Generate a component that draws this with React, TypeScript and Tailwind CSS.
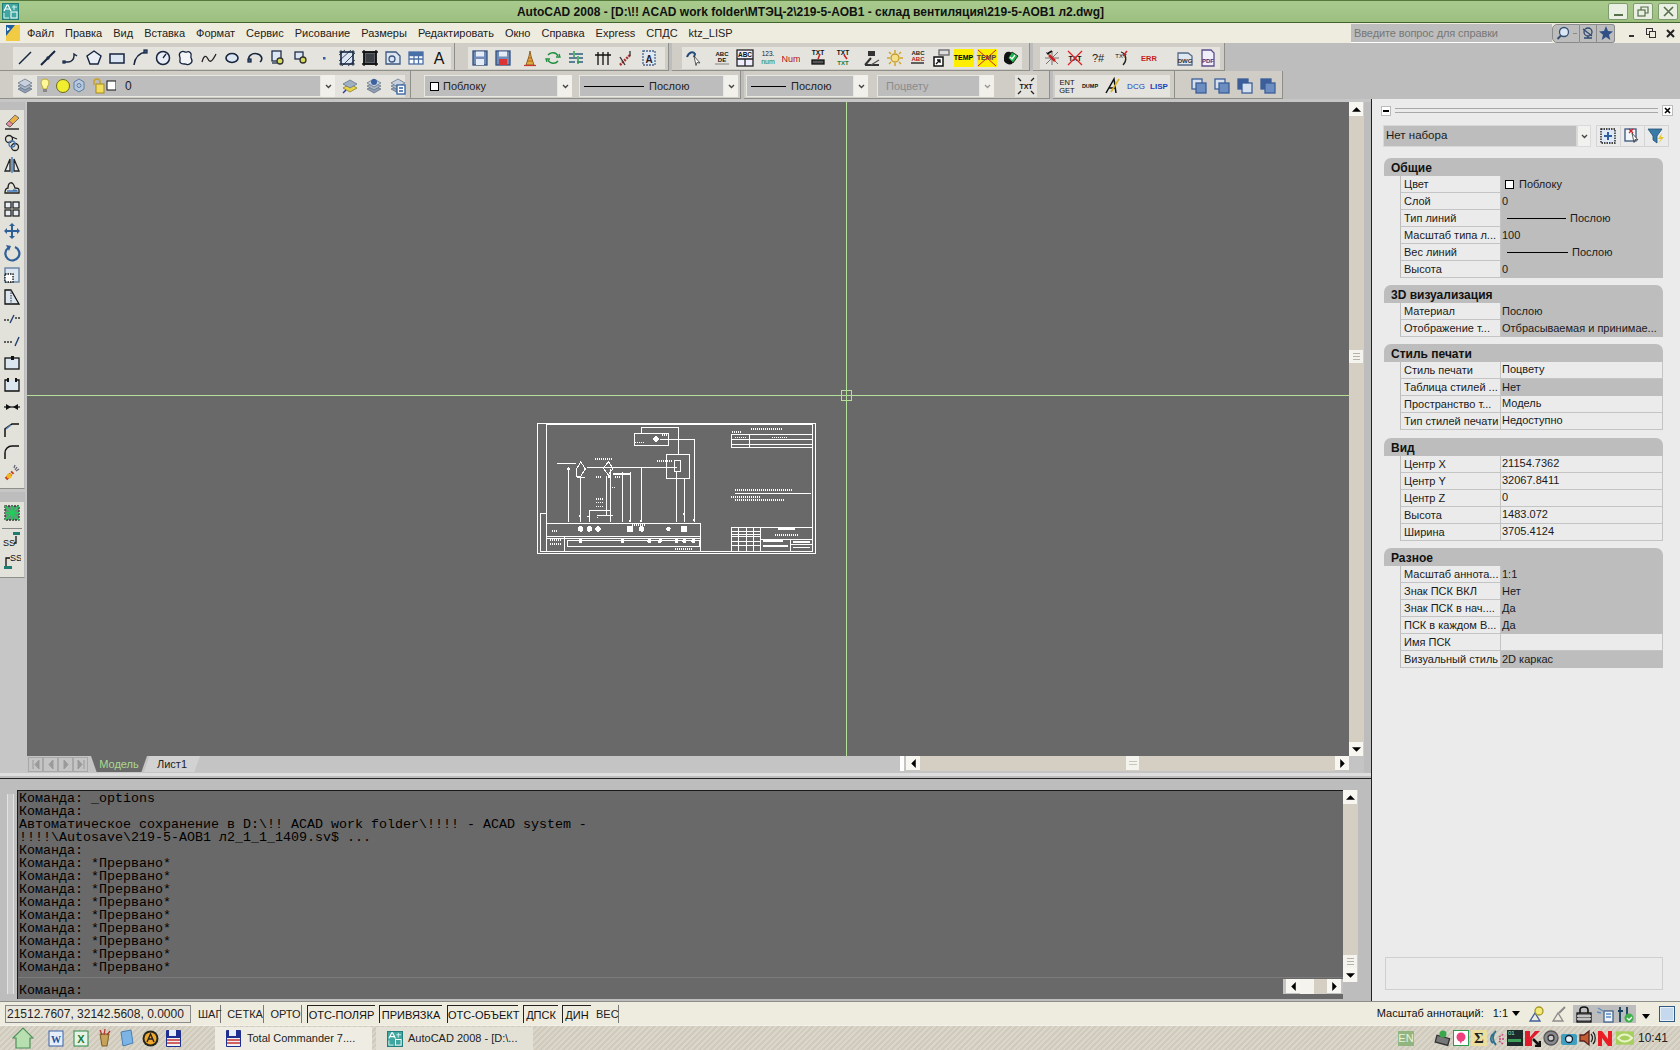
import type { ReactNode } from "react";

// --- small drawing helpers ---------------------------------------------------
const Ic = ({ children, s = 18 }: { children: ReactNode; s?: number }) => (
  <svg width={s} height={s} viewBox="0 0 18 18" fill="none" stroke="#1f2f4a" strokeWidth="1.3">
    {children}
  </svg>
);

const Cell = ({ children }: { children?: ReactNode }) => (
  <div className="w-[23px] h-[22px] flex items-center justify-center shrink-0">{children}</div>
);

const Gap4 = () => <div className="w-[4px] shrink-0" />;

const Word = ({ t, c = "#111", size = 7, y = 12, weight = 700 }: { t: string; c?: string; size?: number; y?: number; weight?: number }) => (
  <text x="9" y={y} textAnchor="middle" fontFamily="Liberation Sans" fontSize={size} fontWeight={weight} fill={c} stroke="none">
    {t}
  </text>
);

const Floppy = ({ red }: { red?: boolean }) => (
  <Ic>
    <rect x="2" y="2" width="14" height="14" fill="#6f8db8" stroke="#34507f" />
    <rect x="5" y="2.5" width="8" height="5" fill="#e6ecf5" stroke="none" />
    <rect x="5" y="10" width="8" height="6" fill={red ? "#d33" : "#e6ecf5"} stroke="none" />
  </Ic>
);

const Flame = () => (
  <Ic>
    <path d="M5 16L8 7l1-5 1 5 3 9z" fill="#e0a93a" stroke="#7d4c10" strokeWidth="0.8" />
    <path d="M6 12h6M7 9h4" stroke="#a8521a" strokeWidth="0.8" />
    <path d="M3 16.500h12" stroke="#c33" strokeWidth="1.200" />
  </Ic>
);

const Arrow = ({ dir }: { dir: "up" | "down" | "left" | "right" }) => (
  <svg width="9" height="9" viewBox="0 0 8 8" fill="#000">
    {dir === "up" && <path d="M0 6L4 2l4 4z" />}
    {dir === "down" && <path d="M0 2L4 6l4-4z" />}
    {dir === "left" && <path d="M6 0L2 4l4 4z" />}
    {dir === "right" && <path d="M2 0l4 4-4 4z" />}
  </svg>
);

const ScrollBtn = ({ dir }: { dir: "up" | "down" | "left" | "right" }) => (
  <div className="w-[14px] h-[14px] bg-[#f7f6f1] flex items-center justify-center shrink-0">
    <Arrow dir={dir} />
  </div>
);

const Thumb = ({ vertical }: { vertical?: boolean }) =>
  vertical ? (
    <div className="w-[14px] h-[13px] bg-[#f4f3ee] flex flex-col items-center justify-center gap-[2px]">
      <div className="w-[7px] h-px bg-[#b5b3a8]" />
      <div className="w-[7px] h-px bg-[#b5b3a8]" />
      <div className="w-[7px] h-px bg-[#b5b3a8]" />
    </div>
  ) : (
    <div className="w-[13px] h-[14px] bg-[#f4f3ee] flex flex-col items-center justify-center gap-[2px]">
      <div className="w-[8px] h-px bg-[#c9c7bb]" />
      <div className="w-[8px] h-px bg-[#c9c7bb]" />
    </div>
  );

// --- title + menu -----------------------------------------------------------
const AcadLogo = ({ s = 17 }: { s?: number }) => (
  <svg width={s} height={s} viewBox="0 0 17 17">
    <rect width="17" height="17" fill="#1f7d7a" />
    <rect x="1" y="1" width="15" height="15" fill="#3fa6a0" />
    <path d="M2 8L5 2h1l3 6M3.500 6h4" stroke="#fff" strokeWidth="1.2" fill="none" />
    <rect x="9" y="9" width="6" height="6" fill="none" stroke="#fff" />
    <path d="M2 10v5h5" stroke="#d7f3ee" fill="none" />
    <path d="M12 2v5M10 4h5" stroke="#d7f3ee" />
  </svg>
);

const WinBtn = ({ children }: { children: ReactNode }) => (
  <div className="w-[20px] h-[17px] bg-[#e9efe2] border border-[#7f9a6c] rounded-[2px] flex items-center justify-center">
    {children}
  </div>
);

const TitleBar = () => (
  <div className="h-[23px] bg-gradient-to-b from-[#a9ca8d] via-[#a3c688] to-[#9cbf80] border-t border-t-[#567a3e] border-b border-b-[#40642c] flex items-center shrink-0">
    <div className="ml-[2px]">
      <AcadLogo />
    </div>
    <div className="flex-1 text-center text-[12px] font-bold text-[#111] pr-[6px]">
      AutoCAD 2008 - [D:\!! ACAD work folder\МТЭЦ-2\219-5-АОВ1 - склад вентиляция\219-5-АОВ1 л2.dwg]
    </div>
    <div className="flex gap-[5px] pr-[2px]">
      <WinBtn>
        <div className="w-[9px] h-[2px] bg-[#56714a] mt-[7px]" />
      </WinBtn>
      <WinBtn>
        <svg width="12" height="11" viewBox="0 0 12 11" fill="none" stroke="#56714a" strokeWidth="1.2">
          <rect x="1" y="4" width="7" height="6" />
          <path d="M4 4V1h7v6H8" />
        </svg>
      </WinBtn>
      <WinBtn>
        <svg width="11" height="11" viewBox="0 0 11 11" stroke="#56714a" strokeWidth="1.6">
          <path d="M1 1l9 9M10 1l-9 9" />
        </svg>
      </WinBtn>
    </div>
  </div>
);

const MenuBar = () => (
  <div className="h-[20px] bg-[#eeecdf] flex items-center shrink-0">
    <div className="w-[24px] pl-[4px] h-full flex items-center">
      <svg width="17" height="18" viewBox="0 0 17 18">
        <rect x="2" y="1" width="14" height="16" fill="#f2cb45" />
        <path d="M2 1h9L2 12z" fill="#1f5f9f" />
        <path d="M3 3l3 2-3 2z" fill="#fff" />
      </svg>
    </div>
    <div className="flex gap-[11px] ml-[3px] text-[#222]">
      {["Файл", "Правка", "Вид", "Вставка", "Формат", "Сервис", "Рисование", "Размеры", "Редактировать", "Окно", "Справка", "Express", "СПДС", "ktz_LISP"].map((m) => (
        <span key={m}>{m}</span>
      ))}
    </div>
    <div className="ml-auto flex items-center h-full mr-[5px]">
      <div className="w-[201px] h-[19px] bg-[#bdbdbd] border-b border-white text-[#777] text-[11px] tracking-[-0.1px] pl-[3px] leading-[18px]">
        Введите вопрос для справки
      </div>
      <div className="w-[28px] h-[19px] bg-[#bdbdbd] border border-[#8a8a8a] rounded-l-[5px] flex items-center pl-[3px] gap-[3px]">
        <svg width="14" height="14" viewBox="0 0 14 14" fill="#dbe7f2" stroke="#35506f" strokeWidth="1.3">
          <circle cx="8" cy="6" r="4.500" />
          <path d="M5 9.500L1.500 13" strokeWidth="2" />
        </svg>
        <span className="w-[4px] h-px bg-[#888]" />
      </div>
      <div className="w-[17px] h-[19px] bg-[#bdbdbd] border-y border-r border-[#8a8a8a] flex items-center justify-center">
        <svg width="14" height="14" viewBox="0 0 14 14" fill="none" stroke="#2f4a72" strokeWidth="1.3">
          <circle cx="7" cy="6" r="4" />
          <path d="M3 12h8M7 10v2M2 3l9 7" />
        </svg>
      </div>
      <div className="w-[18px] h-[19px] bg-[#bdbdbd] border-y border-r border-[#8a8a8a] rounded-r-[3px] flex items-center justify-center">
        <svg width="14" height="14" viewBox="0 0 14 14" fill="#2f4f85">
          <path d="M7 0l2 5 5 .4-4 3.300L11.300 14 7 11l-4.300 3L4 8.700 0 5.400 5 5z" />
        </svg>
      </div>
      <div className="w-[5px] ml-[14px] h-[2px] bg-[#333] mt-[5px]" />
      <svg className="ml-[12px]" width="10" height="10" viewBox="0 0 10 10" fill="none" stroke="#333">
        <rect x="0.500" y="0.500" width="6" height="6" />
        <rect x="3.500" y="3.500" width="6" height="6" fill="#eeecdf" />
      </svg>
      <svg className="ml-[10px]" width="9" height="9" viewBox="0 0 9 9" stroke="#222" strokeWidth="2">
        <path d="M1 1l7 7M8 1L1 8" />
      </svg>
    </div>
  </div>
);

// --- top toolbars ------------------------------------------------------------
const Bar = ({ children, className }: { children: ReactNode; className: string }) => (
  <div className={`${className} h-full bg-[#cfcdc5] border-r border-r-[#8f8f8a] border-b border-b-[#8f8f8a] pt-[3px] flex items-center shrink-0`}>
    {children}
  </div>
);

const Inner = ({ children, className }: { children: ReactNode; className: string }) => (
  <div className={`${className} h-[22px] bg-[#e4e3dd] flex items-center shrink-0`}>{children}</div>
);

const node = "#2f5f9f";
const draw = [
  <Ic><path d="M3 15L15 3" stroke="#15243f" strokeWidth="1.5" /></Ic>,
  <Ic><path d="M2 16L16 2" stroke="#15243f" strokeWidth="2" /><circle cx="9" cy="9" r="1" fill={node} /></Ic>,
  <Ic><path d="M2 13h4a6 6 0 0 0 6-6V5l3 2" stroke="#15243f" strokeWidth="1.4" /><rect x="1" y="12" width="2" height="2" fill={node} /></Ic>,
  <Ic><path d="M9 2l7 5-3 8H5L2 7z" fill="#e9eef6" stroke="#15243f" strokeWidth="1.4" /></Ic>,
  <Ic><rect x="2" y="5" width="14" height="9" fill="#dce6f2" stroke="#15243f" strokeWidth="1.5" /></Ic>,
  <Ic><path d="M3 16C4 8 8 4 15 3" stroke="#15243f" strokeWidth="1.5" /><rect x="13" y="1" width="3" height="3" fill={node} /></Ic>,
  <Ic><circle cx="9" cy="9" r="6.500" fill="#e9eef6" stroke="#15243f" strokeWidth="1.5" /><path d="M9 9l3-4" stroke="#15243f" /></Ic>,
  <Ic><path d="M4 3c3-2 4 1 6 0s5 1 4 4 3 4 0 7-4 1-6 1-6 0-5-4-3-5 1-8z" fill="#f2f4f8" stroke="#15243f" /></Ic>,
  <Ic><path d="M2 13c2-7 4-7 6-3s4 3 8-5" stroke="#222" /></Ic>,
  <Ic><ellipse cx="9" cy="9" rx="6" ry="4.500" fill="#dce6f2" stroke="#15243f" strokeWidth="1.6" /></Ic>,
  <Ic><path d="M3 11A6.500 5 0 1 1 14 13" stroke="#15243f" strokeWidth="1.6" /><rect x="2" y="10" width="3" height="3" fill={node} /></Ic>,
  <Ic><rect x="3" y="2" width="9" height="10" fill="#dce6f2" /><circle cx="11" cy="12" r="3" fill="#d6dc5a" stroke="#333" /><path d="M3 14h5" /></Ic>,
  <Ic><rect x="3" y="3" width="8" height="7" fill="#dce6f2" /><circle cx="11" cy="11" r="3" fill="#d6dc5a" stroke="#333" /></Ic>,
  <Ic><rect x="8" y="8" width="2.500" height="2.500" fill={node} stroke="none" /></Ic>,
  <Ic><rect x="3" y="3" width="12" height="12" fill="#dce6f2" stroke="#15243f" /><path d="M1 6l6-5M1 12L13 1M4 17L17 4M10 17l7-6M3 1v16M15 1v16M1 3h16M1 15h16" strokeWidth="0.8" stroke="#15243f" /></Ic>,
  <Ic><rect x="3" y="3" width="12" height="12" fill="#5a6066" stroke="#111" strokeWidth="1.500" /><path d="M3 1v16M15 1v16M1 3h16M1 15h16" stroke="#111" /><rect x="5" y="5" width="8" height="8" fill="#3a3f44" stroke="none" /></Ic>,
  <Ic><path d="M2 3h10l4 4v8H2z" fill="#dce6f2" stroke="#3d587f" /><circle cx="8" cy="10" r="3" stroke="#3d587f" /></Ic>,
  <Ic><rect x="2" y="3" width="14" height="12" fill="#fff" stroke="#4a6fa8" /><path d="M2 6.500h14M2 10h14M7 3v12M11.500 3v12" stroke="#4a6fa8" /><rect x="2" y="3" width="14" height="3" fill="#4a6fa8" stroke="none" /></Ic>,
  <Ic><Word t="A" size={16} y={15} weight={400} /></Ic>,
];

const Row1 = () => (
  <div className="h-[28px] flex items-stretch shrink-0">
    <Bar className="w-[455px] pl-[13px]">
      <Inner className="w-[438px]">{draw.map((d, i) => <Cell key={i}>{d}</Cell>)}</Inner>
    </Bar>
    <Bar className="w-[214px] pl-[13px]">
      <Inner className="w-[197px]">
        <Cell><Floppy /></Cell>
        <Cell><Floppy red /></Cell>
        <Gap4 />
        <Cell><Flame /></Cell>
        <Cell><Ic><path d="M4 6a6 6 0 0 1 10 1M14 12a6 6 0 0 1-10-1" stroke="#1f8f3f" strokeWidth="1.5" /><path d="M12 8h4l-1-3M6 10H2l1 3" stroke="#1f8f3f" /></Ic></Cell>
        <Cell><Ic><path d="M2 5h4M8 5h8M2 9h8M12 9h4M2 13h6M10 13h6" stroke="#285f7f" strokeWidth="1.500" /><path d="M7 2v6M11 7v8" stroke="#2f9f4f" strokeWidth="1.500" /></Ic></Cell>
        <Gap4 />
        <Cell><Ic><path d="M1 6h16M4 3v13M9 3v13M14 3v13" stroke="#111" /></Ic></Cell>
        <Cell><Ic><path d="M3 16l10-10" stroke="#a83232" strokeWidth="2.500" strokeDasharray="2 1" /><path d="M13 2v5M3 8l5 8" stroke="#333" /></Ic></Cell>
        <Cell><Ic><rect x="3" y="2" width="12" height="14" fill="#dfe7f0" stroke="#4d648a" strokeDasharray="2 1" /><Word t="A" size={10} y={14} c="#223" /></Ic></Cell>
      </Inner>
    </Bar>
    <Bar className="w-[358px] pl-[10px] ml-[3px]">
      <Inner className="w-[340px]">
        <Cell><Ic><path d="M2 8c2-5 6-6 8-3l-1 3" stroke="#234a7a" strokeWidth="2" /><path d="M9 7l6 7-3-.5-1 3z" fill="#fff" stroke="#333" strokeWidth="0.8" /></Ic></Cell>
        <div className="w-[5px] shrink-0" />
        <Cell><Ic><Word t="ABC" size={6} y={7} /><Word t="DE" size={6} y={13} /><path d="M2 15h14" stroke="#999" /></Ic></Cell>
        <Cell><Ic><rect x="1" y="1" width="16" height="16" fill="#eef" stroke="#222" /><Word t="ABC" size={6.500} y={8} /><path d="M1 10h16M9 10v7" stroke="#222" /></Ic></Cell>
        <Cell><Ic><Word t="123." size={6.500} y={7} c="#223" weight={400} /><Word t="num" size={7} y={15} c="#17803a" weight={400} /></Ic></Cell>
        <Cell><Ic><Word t="Num" size={9} y={13} c="#b01515" weight={400} /></Ic></Cell>
        <Gap4 />
        <Cell><Ic><Word t="TXT" size={6.500} y={6} /><path d="M11 5l-2 5" stroke="#c22" strokeWidth="1.500" /><rect x="3" y="11" width="12" height="4" fill="#555" stroke="#111" /></Ic></Cell>
        <div className="w-[2px] shrink-0" />
        <Cell><Ic><Word t="TXT" size={6.500} y={6} /><Word t="TXT" size={6} y={16} c="#1c7c3a" /><path d="M10 6l3 4" stroke="#c22" strokeWidth="1.500" /></Ic></Cell>
        <div className="w-[6px] shrink-0" />
        <Cell><Ic><path d="M2 16h14M2 16l6-7" stroke="#333" strokeWidth="2" /><path d="M5 2h7v5H5z" fill="#333" stroke="none" /><path d="M8 16l8-5" stroke="#555" /></Ic></Cell>
        <Cell><Ic><circle cx="9" cy="9" r="4" fill="#f5e08a" stroke="#c49a2a" /><path d="M9 1v3M9 14v3M1 9h3M14 9h3M3 3l2 2M13 13l2 2M15 3l-2 2M3 15l2-2" stroke="#d2a52a" strokeWidth="1.500" /></Ic></Cell>
        <Cell><Ic><Word t="ABC" size={6} y={6} c="#222" /><Word t="ABC" size={6} y={12} c="#b02020" /><path d="M2 14h13" stroke="#333" strokeWidth="1.500" /></Ic></Cell>
        <Cell><Ic><rect x="7" y="1" width="10" height="5" fill="#ddd" stroke="#666" /><rect x="2" y="8" width="9" height="9" fill="#fff" stroke="#111" strokeWidth="1.500" /><path d="M4 15l4-4M5 11h3v3" stroke="#111" /></Ic></Cell>
        <Cell><div className="w-[20px] h-[18px] bg-[#ffee00] text-[7px] font-bold text-black text-center leading-[18px]">TEMP</div></Cell>
        <Cell><div className="w-[20px] h-[18px] bg-[#ffee00] text-[7px] font-bold text-[#444] text-center leading-[18px] relative">TEMP<svg className="absolute inset-0" width="20" height="18" stroke="#c22"><path d="M1 1l18 16M19 1L1 17" /></svg></div></Cell>
        <Cell><Ic><path d="M3 8c0-4 3-6 6-5l6 3-4 9c-3 1-6 0-8-3z" fill="#111" stroke="none" /><path d="M7 9l4-6 6 4-5 7z" fill="#1db54a" stroke="#111" strokeWidth="0.8" /><path d="M9 8l2 2 3-4" stroke="#fff" /></Ic></Cell>
      </Inner>
    </Bar>
    <Bar className="w-[192px] pl-[7px] ml-[3px]">
      <Inner className="w-[180px]">
        <Cell><Ic><path d="M3 3l12 12M15 3L3 15M9 2v14M2 9h14" stroke="#555" strokeWidth="0.8" /><path d="M6 6l6 6" stroke="#c22" strokeWidth="2.500" /><path d="M4 5l5-3" stroke="#111" strokeWidth="2" /></Ic></Cell>
        <Cell><Ic><Word t="TXT" size={7} y={12} /><path d="M2 2l14 14M16 2L2 16" stroke="#d22" /></Ic></Cell>
        <Cell><Ic><Word t="?#" size={11} y={13} weight={400} c="#222" /></Ic></Cell>
        <Cell><Ic><Word t="TXT" size={6} y={9} weight={400} /><path d="M9 3c6 2 6 9 2 13" stroke="#222" /><path d="M15 2l-4 5" stroke="#c22" strokeWidth="1.500" /></Ic></Cell>
        <div className="w-[5px] shrink-0" />
        <Cell><Ic><Word t="ERR" size={7.500} y={12} c="#c61c1c" /></Ic></Cell>
        <div className="w-[13px] shrink-0" />
        <Cell><Ic><path d="M2 4h10l4 3v9H2z" fill="#dfe8f2" stroke="#566b88" /><Word t="DWG" size={6} y={14} c="#234" /></Ic></Cell>
        <Cell><Ic><path d="M3 1h9l3 3v13H3z" fill="#f0eefa" stroke="#5c4d8a" /><Word t="PDF" size={6} y={14} c="#42307a" /></Ic></Cell>
      </Inner>
    </Bar>
  </div>
);

const Combo = ({ w, children, dim }: { w: string; children: ReactNode; dim?: boolean }) => (
  <div className="flex items-stretch h-[22px] shrink-0">
    <div className={`${w} bg-[#bdbdbd] border border-[#e8e8e2] flex items-center overflow-hidden ${dim ? "text-[#8c8c8c]" : "text-[#222]"}`}>
      {children}
    </div>
    <div className="w-[14px] bg-[#f1f0ea] flex items-center justify-center">
      <svg width="7" height="5" viewBox="0 0 7 5" stroke={dim ? "#999" : "#444"} fill="none" strokeWidth="1.4">
        <path d="M1 1l2.500 2.500L6 1" />
      </svg>
    </div>
  </div>
);

const LineSample = ({ w }: { w: string }) => <div className={`${w} h-px bg-black shrink-0`} />;

const Layers = () => (
  <Ic>
    <path d="M9 9L2 12l7 4 7-4z" fill="#8fa0b5" stroke="#5c6a7c" strokeWidth="0.7" />
    <path d="M9 6L2 9l7 4 7-4z" fill="#aab7c7" stroke="#5c6a7c" strokeWidth="0.7" />
    <path d="M9 2L2 6l7 4 7-4z" fill="#c7d0dc" stroke="#5c6a7c" strokeWidth="0.7" />
  </Ic>
);

const Row2 = () => (
  <div className="h-[28px] flex items-stretch shrink-0">
    <Bar className="w-[411px] pl-[13px]">
      <Inner className="w-[392px]">
        <Cell><Layers /></Cell>
        <Combo w="w-[285px]">
          <svg className="ml-[1px] shrink-0" width="78" height="18" viewBox="0 0 78 18">
            <path d="M7 2c-3 0-4 2-4 4 0 2 2 3 2 6h4c0-3 2-4 2-6 0-2-1-4-4-4z" fill="#fff79a" stroke="#b9a72c" />
            <rect x="5" y="12" width="4" height="3" fill="#888" />
            <circle cx="25" cy="9" r="6.500" fill="#f1ee2f" stroke="#6a6a20" />
            <path d="M41 2l5 3v7l-5 3-5-3V5z" fill="#b8c9dc" stroke="#5c7fa8" />
            <circle cx="41" cy="8.500" r="2" fill="none" stroke="#5c7fa8" />
            <path d="M56 8V5c0-4 6-4 6 0v3" fill="none" stroke="#c9a227" strokeWidth="1.500" />
            <rect x="58" y="7" width="8" height="9" fill="#f3dd5c" stroke="#a58a1f" />
            <rect x="69" y="4" width="9" height="9" fill="#fff" stroke="#111" />
          </svg>
          <span className="ml-[9px] text-[12px]">0</span>
        </Combo>
        <div className="w-[3px] shrink-0" />
        <Cell><Ic><path d="M9 7L2 11l7 4 7-4z" fill="#e6d445" stroke="#80761f" strokeWidth="0.7" /><path d="M9 3L2 7l7 4 7-4z" fill="#9fb0c3" stroke="#5c6a7c" strokeWidth="0.7" /><path d="M2 16l3-3" stroke="#2a3c9f" strokeWidth="1.500" /></Ic></Cell>
        <div className="w-[1px] shrink-0" />
        <Cell><Ic><Layers /><circle cx="9" cy="5" r="3" fill="#3b62a3" stroke="none" /></Ic></Cell>
        <div className="w-[1px] shrink-0" />
        <Cell><Ic><Layers /><rect x="8" y="8" width="8" height="9" fill="#fff" stroke="#2f5f9f" /><path d="M10 11h4M10 14h4" stroke="#2f5f9f" /></Ic></Cell>
      </Inner>
    </Bar>
    <Bar className="w-[330px] pl-[13px]">
      <Combo w="w-[134px]">
        <span className="w-[9px] h-[9px] bg-white border border-black ml-[5px] mr-[4px] shrink-0" />
        <span>Поблоку</span>
      </Combo>
      <div className="w-[7px] shrink-0" />
      <Combo w="w-[145px]">
        <LineSample w="w-[60px] ml-[4px]" />
        <span className="ml-[5px]">Послою</span>
      </Combo>
    </Bar>
    <div className="w-[3px] shrink-0" />
    <Bar className="w-[306px] pl-[2px]">
      <Combo w="w-[108px]">
        <LineSample w="w-[35px] ml-[4px]" />
        <span className="ml-[5px]">Послою</span>
      </Combo>
      <div className="w-[9px] shrink-0" />
      <Combo w="w-[103px]" dim>
        <span className="ml-[8px]">Поцвету</span>
      </Combo>
      <div className="w-[21px] shrink-0" />
      <div className="w-[22px] h-[22px] bg-[#e4e3dd] flex items-center justify-center shrink-0">
        <Ic><Word t="TXT" size={7} y={12} /><path d="M1 1l3 3M17 1l-3 3M1 17l3-3M17 17l-3-3" stroke="#222" /></Ic>
      </div>
    </Bar>
    <Bar className="w-[122px] pl-[2px] ml-[3px]">
      <Inner className="w-[115px]">
        <Cell><Ic><Word t="ENT" size={7.500} y={8} weight={400} /><Word t="GET" size={7.500} y={16} weight={400} /></Ic></Cell>
        <Cell><Ic><Word t="DUMP" size={5.500} y={11} /></Ic></Cell>
        <Cell><Ic><path d="M2 16L10 2l2 14M5 11h6" stroke="#111" strokeWidth="1.500" /><path d="M7 15L15 2" stroke="#d6b11f" strokeWidth="1.500" /></Ic></Cell>
        <Cell><Ic><Word t="DCG" size={8} y={12} c="#1d3fbd" weight={400} /></Ic></Cell>
        <Cell><Ic><Word t="LISP" size={8} y={12} c="#1d3fbd" /></Ic></Cell>
      </Inner>
    </Bar>
    <Bar className="w-[108px] pl-[12px]">
      {[0, 1, 2, 3].map((i) => (
        <Cell key={i}>
          <Ic>
            <rect x="2" y="2" width="10" height="10" fill={i > 1 ? "#3c5e9a" : "#d7e1ee"} stroke="#3c5e9a" />
            <rect x="6" y="6" width="10" height="10" fill={i === 2 ? "#d7e1ee" : "#6b8dbf"} stroke="#3c5e9a" />
          </Ic>
        </Cell>
      ))}
    </Bar>
  </div>
);

// --- left tool column --------------------------------------------------------
const tools = [
  <Ic><path d="M3 12L12 3l4 3-9 9z" fill="#e9b04a" stroke="#555" strokeWidth="0.8" /><path d="M3 12l4 3 3-3-4-3z" fill="#ea8f9f" stroke="#555" strokeWidth="0.8" /><path d="M2 17h14" stroke="#111" /></Ic>,
  <Ic><circle cx="6" cy="5" r="3.500" stroke="#222" /><circle cx="12" cy="13" r="3.500" stroke="#222" /><circle cx="9" cy="10" r="3" stroke="#4b78ae" /><path d="M9 3l5 2" stroke="#222" /></Ic>,
  <Ic><path d="M7 3L2 15h5zM11 3l5 12h-5z" stroke="#222" fill="#e7edf5" /><path d="M9 1v16" stroke="#2f6fb0" /></Ic>,
  <Ic><path d="M2 15h14v-3c0-2-2-2-4-2-1-4-3-6-5-5S5 8 5 10c-2 0-3 2-3 5z" stroke="#222" /><path d="M4 13h10c0-1-2-1-4-1" stroke="#3b78b8" /></Ic>,
  <Ic><rect x="2" y="2" width="6" height="6" stroke="#222" fill="#e7edf5" /><rect x="10" y="2" width="6" height="6" stroke="#222" fill="#e7edf5" /><rect x="2" y="10" width="6" height="6" stroke="#222" fill="#e7edf5" /><rect x="10" y="10" width="6" height="6" stroke="#222" fill="#e7edf5" /></Ic>,
  <Ic><path d="M9 1l3 3h-2v4h4V6l3 3-3 3v-2h-4v4h2l-3 3-3-3h2v-4H4v2L1 9l3-3v2h4V4H6z" fill="#2e5f98" stroke="none" /></Ic>,
  <Ic><path d="M12 3a7 7 0 1 1-7 1" stroke="#2e5f98" strokeWidth="2.200" /><path d="M3 1l5 1-2 5z" fill="#2e5f98" stroke="none" /></Ic>,
  <Ic><rect x="2" y="2" width="14" height="14" fill="#dbe6f1" stroke="#5e7a9c" /><rect x="2" y="8" width="8" height="8" fill="#fff" stroke="#111" strokeDasharray="1.500 1" /></Ic>,
  <Ic><path d="M2 2h6l8 14H2z" fill="#dbe6f1" stroke="#111" /><path d="M8 2v14" stroke="#555" strokeDasharray="1.500 1" /></Ic>,
  <Ic><path d="M1 10h5M12 8h5" stroke="#333" strokeDasharray="2 1" /><path d="M7 13l4-8" stroke="#1d3f6f" strokeWidth="1.400" /></Ic>,
  <Ic><path d="M1 10h9" stroke="#333" strokeDasharray="2 1" /><path d="M12 14l4-9" stroke="#1d3f6f" strokeWidth="1.400" /></Ic>,
  <Ic><rect x="2" y="4" width="14" height="11" fill="#dbe6f1" stroke="#111" /><rect x="8" y="2" width="3" height="4" fill="#111" stroke="none" /></Ic>,
  <Ic><path d="M5 4H2v11h14V4h-3" stroke="#111" fill="#dbe6f1" /><rect x="4" y="2" width="2" height="4" fill="#111" stroke="none" /><rect x="12" y="2" width="2" height="4" fill="#111" stroke="none" /></Ic>,
  <Ic><path d="M1 9h16" stroke="#111" strokeWidth="1.200" /><path d="M3 6l5 3-5 3zM15 6l-5 3 5 3z" fill="#111" stroke="none" /></Ic>,
  <Ic><path d="M2 17V9l7-5h7" stroke="#111" strokeWidth="1.500" /><path d="M3 9l5-4" stroke="#5a86bd" /></Ic>,
  <Ic><path d="M2 17v-6c0-4 3-7 7-7h7" stroke="#111" strokeWidth="1.500" /></Ic>,
  <Ic><path d="M3 15l7-7" stroke="#c33d16" strokeWidth="3.500" strokeDasharray="3 1" /><circle cx="6" cy="12" r="2.500" fill="#f0b81e" stroke="none" /><path d="M12 6l2-3M13 7l3-2M11 4l1-3" stroke="#667" /></Ic>,
];

const LeftTools = () => (
  <div className="w-[27px] flex flex-col shrink-0">
    <div className="w-[25px] bg-[#e2e1da] border-b border-b-[#8f8f8a] border-r border-r-[#bbb] h-[387px] flex flex-col">
      <div className="h-[8px] bg-[#bdbdbd] shrink-0" />
      {tools.map((t, i) => (
        <div key={i} className="h-[22px] flex items-center justify-center shrink-0">{t}</div>
      ))}
    </div>
    <div className="w-[25px] mt-[3px] bg-[#e2e1da] border-b border-b-[#8f8f8a] border-r border-r-[#bbb] h-[86px] flex flex-col">
      <div className="h-[10px] bg-[#bdbdbd] shrink-0" />
      <div className="h-[22px] flex items-center justify-center shrink-0">
        <Ic><rect x="2" y="2" width="14" height="14" fill="#6b8f7a" stroke="#333" strokeDasharray="2 1" /><path d="M2 2l14 14M16 2L2 16M9 2v14M2 9h14" stroke="#1dd05a" strokeWidth="1.500" /></Ic>
      </div>
      <div className="h-px bg-[#888] mx-[2px] mt-[4px]" />
      <div className="h-[22px] flex items-center justify-center shrink-0">
        <Ic><rect x="10" y="1" width="7" height="3" fill="#1f7a70" stroke="none" /><text x="0" y="15" fontSize="9" fontFamily="Liberation Sans" fill="#111" stroke="none">SS</text><path d="M13 5v7h-2" stroke="#111" /></Ic>
      </div>
      <div className="h-[22px] flex items-center justify-center shrink-0">
        <Ic><rect x="1" y="13" width="8" height="3" fill="#1f7a70" stroke="none" /><path d="M3 13V5h4" stroke="#111" /><text x="7" y="8" fontSize="9" fontFamily="Liberation Sans" fill="#111" stroke="none">SS</text></Ic>
      </div>
    </div>
  </div>
);

// --- drawing on the model space ---------------------------------------------
const Dwg = () => (
  <svg className="absolute left-[503px] top-[307px]" width="300" height="150" viewBox="0 0 900 450" fill="none" stroke="#fff" strokeWidth="3" shapeRendering="crispEdges">
    <rect x="22" y="42" width="835" height="390" />
    <rect x="48" y="46" width="800" height="382" />
    <rect x="30" y="313" width="18" height="115" />
    <rect x="313" y="72" width="102" height="36" />
    <path d="M335 72V55h110v80M390 92h103v248M410 135h68v73h-68zM170 175h270M410 175v33" />
    <path d="M115 180v160M150 205v135M240 180v160M278 190v150M300 190v150M333 175v165M440 190v150M463 208v130" />
    <path d="M140 180l12-22 14 22-14 22h-12zM140 205h24M220 178l15-20 14 20-14 20zM228 200v120h20" />
    <path d="M178 305h65M178 305v35M200 318h40" />
    <rect x="434" y="155" width="16" height="32" />
    <path d="M48 343h464v85M48 382h464M48 387h464M103 382v46M112 395h395v18H112z" />
    <path d="M603 76h244v39H603zM603 92h244M603 105h244M658 76v39" />
    <path d="M603 355h244v73H603zM603 375h88M691 355v73M780 390v38M691 390h156" />
    <path d="M603 368h88M603 382h88M603 396h88M603 410h88M625 355v73M650 355v73M670 355v73M780 405h67" />
    <g strokeWidth="5" strokeDasharray="4 2">
      <path d="M663 60h97M605 69h30M615 85h35M725 85h45M615 243h175M603 264h90M615 273h150M745 360h50M735 378h70M700 395h60M790 398h50M700 410h75M790 415h50" />
      <path d="M82 163h55M195 150h50M380 155h50M315 100h30M395 78h15M65 366h20M60 392h35M60 405h35M250 194h50M255 204h15M120 388h45M408 358h15M305 348h40M435 420h55" />
      <path d="M198 203h18M240 235h15M198 270h24M198 280h24M198 292h20M148 320h4M172 322h6M200 325h4M298 335h5M330 335h5M458 315h4M488 332h4" />
    </g>
    <path d="M615 252h228" />
    <g fill="#fff" stroke="none">
      <circle cx="152" cy="360" r="8" />
      <circle cx="178" cy="360" r="8" />
      <circle cx="204" cy="360" r="8" />
      <rect x="292" y="352" width="18" height="16" />
      <circle cx="335" cy="360" r="8" />
      <circle cx="415" cy="360" r="6" />
      <rect x="454" y="352" width="18" height="16" />
      <circle cx="152" cy="396" r="6" />
      <circle cx="278" cy="396" r="6" />
      <circle cx="358" cy="396" r="6" />
      <circle cx="390" cy="396" r="6" />
      <circle cx="440" cy="396" r="6" />
      <circle cx="463" cy="396" r="6" />
      <circle cx="490" cy="396" r="6" />
      <circle cx="378" cy="90" r="8" />
      <circle cx="115" cy="180" r="5" />
      <circle cx="240" cy="204" r="5" />
    </g>
  </svg>
);

// --- model space + tabs ------------------------------------------------------
const Canvas = () => (
  <div className="relative w-[1322px] h-full bg-[#696969] overflow-hidden">
    <Dwg />
    {/* crosshair */}
    <div className="absolute left-[819px] top-0 bottom-0 w-px bg-[#b4e09a]" />
    <div className="absolute left-0 right-0 top-[293px] h-px bg-[#b4e09a]" />
    <div className="absolute left-[814px] top-[288px] w-[11px] h-[11px] border border-[#b4e09a]" />
  </div>
);

const VScroll = () => (
  <div className="w-[15px] h-full bg-[#d4cfc2] flex flex-col">
    <ScrollBtn dir="up" />
    <div className="h-[234px]" />
    <Thumb vertical />
    <div className="flex-1" />
    <ScrollBtn dir="down" />
  </div>
);

const NavBtn = ({ d }: { d: string }) => (
  <div className="w-[15px] h-[15px] border border-[#a8a8a8] flex items-center justify-center">
    <svg width="10" height="9" viewBox="0 0 10 9" fill="#9a9a9a" stroke="#9a9a9a">
      <path d={d} />
    </svg>
  </div>
);

const Tabs = () => (
  <div className="h-[17px] bg-[#c4c4c4] flex items-start">
    <div className="flex pl-px mt-px">
      <NavBtn d="M2 0v9M8 0L4 4.500 8 9z" />
      <NavBtn d="M7 0L3 4.500 7 9z" />
      <NavBtn d="M3 0l4 4.500L3 9z" />
      <NavBtn d="M8 0v9M2 0l4 4.500L2 9z" />
    </div>
    <div className="ml-[3px] h-[16px] w-[56px] bg-[#696969] [clip-path:polygon(0_0,100%_0,90%_100%,10%_100%)] text-[#a9d98f] text-center leading-[16px]">
      Модель
    </div>
    <div className="-ml-[3px] h-[16px] w-[56px] text-[#222] text-center leading-[16px] bg-[#d2d2d2] [clip-path:polygon(10%_0,100%_0,90%_100%,0_100%)]">
      Лист1
    </div>
    <div className="ml-auto flex h-[15px] w-[449px] shrink-0">
      <div className="w-[4px] bg-white mr-[2px]" />
      <ScrollBtn dir="left" />
      <div className="flex-1 bg-[#d4cfc2] flex">
        <div className="w-[206px]" />
        <Thumb />
      </div>
      <ScrollBtn dir="right" />
    </div>
    <div className="w-[15px] shrink-0" />
  </div>
);

// --- command window ----------------------------------------------------------
const cmdLines = [
  "Команда: _options",
  "Команда:",
  "Автоматическое сохранение в D:\\!! ACAD work folder\\!!!! - ACAD system -",
  "!!!!\\Autosave\\219-5-АОВ1 л2_1_1_1409.sv$ ...",
  "Команда:",
  ...Array(9).fill("Команда: *Прервано*"),
];

const CommandWindow = () => (
  <div className="h-[211px] flex shrink-0">
    <div className="w-[17px] flex pl-[7px]">
      <div className="w-[7px] h-[200px] mt-[4px] border-x border-[#e3e3e3] bg-[#c9c9c9]" />
    </div>
    <div className="w-[1326px] flex flex-col h-[209px] bg-[#696969] border-t border-t-[#1a1a1a] border-l border-l-[#1a1a1a]">
      <div className="h-[190px] pt-[1px] pl-px border-b border-b-[#7c7c7c] font-['Liberation_Mono',monospace] text-[13.33px] leading-[13px] text-black">
        {cmdLines.map((l, i) => (
          <div key={i} className="whitespace-pre h-[13px]">{l}</div>
        ))}
      </div>
      <div className="flex-1 flex font-['Liberation_Mono',monospace] text-[13.33px] leading-[16px] text-black pl-px">
        <span className="mt-[5px]">Команда:</span>
        <div className="ml-auto w-[60px] h-[15px] mt-px bg-[#c4c4c4] flex pl-[3px] pr-[2px]">
          <ScrollBtn dir="left" />
          <div className="flex-1 bg-[#d4cfc2] flex">
            <div className="w-[14px] bg-[#f4f3ee]" />
          </div>
          <ScrollBtn dir="right" />
        </div>
      </div>
    </div>
    <div className="w-[15px] h-[192px] bg-[#d4cfc2] flex flex-col">
      <ScrollBtn dir="up" />
      <div className="flex-1" />
      <Thumb vertical />
      <ScrollBtn dir="down" />
    </div>
  </div>
);

// --- properties palette ------------------------------------------------------
type Row = { k: string; v?: ReactNode; light?: boolean };

const Ln = ({ t, w }: { t: string; w: string }) => (
  <span className="flex items-center">
    <span className={`${w} h-px bg-black ml-[5px] mr-[4px]`} />
    {t}
  </span>
);

const groups: { name: string; cls: string; rows: Row[] }[] = [
  {
    name: "Общие",
    cls: "mt-[11px]",
    rows: [
      { k: "Цвет", v: <span className="flex items-center"><span className="w-[9px] h-[9px] bg-white border border-black ml-[3px] mr-[5px]" />Поблоку</span> },
      { k: "Слой", v: "0" },
      { k: "Тип линий", v: <Ln t="Послою" w="w-[59px]" /> },
      { k: "Масштаб типа л...", v: "100" },
      { k: "Вес линий", v: <Ln t="Послою" w="w-[61px]" /> },
      { k: "Высота", v: "0" },
    ],
  },
  {
    name: "3D визуализация",
    cls: "mt-[7px]",
    rows: [
      { k: "Материал", v: "Послою" },
      { k: "Отображение т...", v: "Отбрасываемая и принимае..." },
    ],
  },
  {
    name: "Стиль печати",
    cls: "mt-[7px]",
    rows: [
      { k: "Стиль печати", v: "Поцвету", light: true },
      { k: "Таблица стилей ...", v: "Нет" },
      { k: "Пространство т...", v: "Модель", light: true },
      { k: "Тип стилей печати", v: "Недоступно", light: true },
    ],
  },
  {
    name: "Вид",
    cls: "mt-[8px]",
    rows: [
      { k: "Центр X", v: "21154.7362", light: true },
      { k: "Центр Y", v: "32067.8411", light: true },
      { k: "Центр Z", v: "0", light: true },
      { k: "Высота", v: "1483.072", light: true },
      { k: "Ширина", v: "3705.4124", light: true },
    ],
  },
  {
    name: "Разное",
    cls: "mt-[7px]",
    rows: [
      { k: "Масштаб аннота...", v: "1:1" },
      { k: "Знак ПСК ВКЛ", v: "Нет" },
      { k: "Знак ПСК в нач....", v: "Да" },
      { k: "ПСК в каждом В...", v: "Да" },
      { k: "Имя ПСК", light: true },
      { k: "Визуальный стиль", v: "2D каркас" },
    ],
  },
];

const Properties = () => (
  <div className="w-[308px] min-w-0 shrink-0 bg-[#ebebeb] flex flex-col pl-[12px] pr-[17px] text-[#1a1a1a]">
    <div className="h-[15px] mt-[4px] -ml-[3px] -mr-[10px] flex items-center gap-[3px]">
      <div className="w-[10px] h-[10px] bg-white border border-[#bbb] flex items-center justify-center">
        <div className="w-[6px] h-[2px] bg-black" />
      </div>
      <div className="flex-1 h-[5px] border-y border-[#a8a8a8] mx-[1px]" />
      <div className="w-[11px] h-[11px] bg-white border border-[#bbb] flex items-center justify-center">
        <svg width="7" height="7" stroke="#000" strokeWidth="1.600"><path d="M1 1l5 5M6 1L1 6" /></svg>
      </div>
    </div>
    <div className="h-[22px] mt-[7px] -ml-[1px] -mr-[6px] flex items-stretch">
      <div className="w-[195px] bg-[#bdbdbd] border border-[#d8d8d8] pl-[2px] text-[11.500px] leading-[19px]">Нет набора</div>
      <div className="w-[14px] border border-[#dadada] bg-[#f1f1ee] flex items-center justify-center">
        <svg width="7" height="5" viewBox="0 0 7 5" stroke="#444" fill="none" strokeWidth="1.400"><path d="M1 1l2.500 2.500L6 1" /></svg>
      </div>
      <div className="w-[5px]" />
      <div className="flex border border-[#d4d4d4]">
        <div className="w-[24px] flex items-center justify-center border-r border-[#d4d4d4]">
          <Ic><rect x="2" y="2" width="14" height="14" fill="#dfe9f5" stroke="#111" strokeDasharray="1.500 1" /><path d="M9 5v8M5 9h8" stroke="#2f5f9f" strokeWidth="2" /></Ic>
        </div>
        <div className="w-[24px] flex items-center justify-center border-r border-[#d4d4d4]">
          <Ic><rect x="2" y="2" width="11" height="12" fill="#f2f6fb" stroke="#39557a" /><path d="M6 2l4 4M10 2L6 6" stroke="#c22" strokeWidth="1.300" /><path d="M9 6l6 7-3-.5-1 3z" fill="#fff" stroke="#333" strokeWidth="0.800" /></Ic>
        </div>
        <div className="w-[23px] flex items-center justify-center">
          <Ic><path d="M1 2h14l-5 7v7l-4-3V9z" fill="#3a7aa8" stroke="#22506f" strokeWidth="0.800" /><path d="M15 6l-4 6h3l-3 5 6-7h-3z" fill="#e7c62a" stroke="none" /></Ic>
        </div>
      </div>
    </div>
    {groups.map((g) => (
      <div key={g.name} className={g.cls}>
        <div className="h-[18px] bg-[#bdbdbd] rounded-t-[7px] font-bold text-[12px] pl-[7px] leading-[20px] text-[#111]">{g.name}</div>
        <div className="ml-[16px]">
          {g.rows.map((r) => (
            <div key={r.k} className="h-[17px] flex">
              <div className="w-[101px] shrink-0 bg-[#ebebeb] border-l border-l-[#bdbdbd] border-b border-b-[#c4c4c4] border-r border-r-[#c4c4c4] pl-[3px] leading-[16px] whitespace-nowrap overflow-hidden">{r.k}</div>
              <div className={`flex-1 pl-[1px] pb-[1px] leading-[15px] whitespace-nowrap overflow-hidden flex items-center ${r.light ? "bg-[#ebebeb] border-b border-b-[#c4c4c4] border-r border-r-[#c4c4c4]" : "bg-[#bdbdbd]"}`}>{r.v}</div>
            </div>
          ))}
        </div>
      </div>
    ))}
    <div className="mt-auto mb-[11px] h-[33px] border border-[#cfcfcf] ml-[1px]" />
  </div>
);

// --- status + task bar -------------------------------------------------------
const toggles = [
  { t: "ШАГ", w: "w-[23px]", on: false, g: "ml-[7px]" },
  { t: "СЕТКА", w: "w-[37px]", on: false, g: "ml-[6px]" },
  { t: "ОРТО", w: "w-[32px]", on: false, g: "ml-[6px]" },
  { t: "ОТС-ПОЛЯР", w: "w-[68px]", on: true, g: "ml-[5px]" },
  { t: "ПРИВЯЗКА", w: "w-[63px]", on: true, g: "ml-[4px]" },
  { t: "ОТС-ОБЪЕКТ", w: "w-[71px]", on: true, g: "ml-[5px]" },
  { t: "ДПСК", w: "w-[35px]", on: true, g: "ml-[5px]" },
  { t: "ДИН", w: "w-[29px]", on: true, g: "ml-[4px]" },
  { t: "ВЕС", w: "w-[23px]", on: false, g: "ml-[5px]" },
];

const StatusBar = () => (
  <div className="h-[24px] bg-[#eeecdf] border-t border-t-[#8f8f8a] flex items-center shrink-0">
    <div className="ml-[5px] w-[186px] h-[18px] border border-[#8a8a8a] bg-[#e9e7db] pl-[1px] leading-[16px] text-[#222] text-[12px]">21512.7607, 32142.5608, 0.0000</div>
    {toggles.map((b) => (
      <div key={b.t} className={`${b.w} ${b.g} h-[18px] text-center leading-[19px] whitespace-nowrap ${b.on ? "border-l border-t border-l-[#222] border-t-[#222] text-[#111]" : "border-r border-r-[#777] text-[#222]"}`}>
        {b.t}
      </div>
    ))}
    <div className="ml-auto flex items-center text-[#111]">
      <span>Масштаб аннотаций:</span>
      <span className="ml-[9px]">1:1</span>
      <div className="ml-[4px] w-0 h-0 border-x-[4px] border-x-transparent border-t-[5px] border-t-black" />
      <div className="ml-[7px]">
        <Ic><path d="M3 16l5-8 5 8z" stroke="#3d5f9a" /><circle cx="12" cy="6" r="4" fill="#f3ea78" stroke="#a59827" /></Ic>
      </div>
      <div className="ml-[5px]">
        <Ic><path d="M3 16l5-8 5 8z" stroke="#8a8a8a" /><path d="M9 8l6-6" stroke="#8a8a8a" strokeWidth="2" /></Ic>
      </div>
      <div className="ml-[5px] w-[63px] h-[18px] bg-[#bdbdbd] flex items-center justify-around">
        <Ic><rect x="2" y="8" width="14" height="9" fill="#777" stroke="#111" /><path d="M5 8V5c0-4 8-4 8 0v3" stroke="#111" strokeWidth="1.600" /><path d="M2 11h14M2 14h14" stroke="#ddd" /></Ic>
        <Ic><rect x="8" y="6" width="9" height="11" fill="#eef3fa" stroke="#44628a" /><path d="M10 9h5M10 12h5M2 3l5 3M1 7l4 1" stroke="#5d8fc2" /></Ic>
        <Ic><path d="M3 2v15M1 6h5M10 2v10" stroke="#133f5a" strokeWidth="1.800" /><circle cx="12" cy="13" r="4.500" fill="#3fb14a" stroke="none" /><path d="M10 13l2 2 3-3" stroke="#fff" /></Ic>
      </div>
      <div className="ml-[6px] w-0 h-0 border-x-[4px] border-x-transparent border-t-[5px] border-t-black mt-[5px]" />
      <div className="ml-[9px] mr-[5px] w-[16px] h-[16px] bg-[#c4d8ee] border border-[#2f5a86] shadow-[inset_0_0_0_1px_#e8f0f8]" />
    </div>
  </div>
);

const TaskBtn = ({ w, children }: { w: string; children: ReactNode }) => (
  <div className={`${w} h-[23px] bg-[#efede3] flex items-center gap-[5px] pl-[11px] text-[11px] text-[#222] whitespace-nowrap shrink-0`}>
    {children}
  </div>
);

const FloppyRed = () => (
  <svg width="15" height="17" viewBox="0 0 15 17">
    <rect width="15" height="17" rx="1" fill="#1f2f8f" />
    <rect x="3" y="0" width="7" height="6" fill="#e6ecf8" />
    <rect x="1" y="8" width="13" height="8" fill="#f1f1f1" />
    <path d="M1 10h13M1 13h13" stroke="#c83333" strokeWidth="1.500" />
  </svg>
);

const Tray = ({ children }: { children: ReactNode }) => (
  <div className="w-[18px] h-[18px] flex items-center justify-center shrink-0">{children}</div>
);

const Taskbar = () => (
  <div className="h-[25px] flex items-end shrink-0 bg-[#d6d1c4] bg-[repeating-linear-gradient(135deg,#dad6ca_0px,#dad6ca_2px,#cfcabb_2px,#cfcabb_4px)] border-t border-t-[#f2f0e8]">
    <div className="w-[215px] h-full flex items-center pl-[12px] shrink-0">
      <svg width="22" height="22" viewBox="0 0 22 22" fill="#b7dfaf" stroke="#4f8f5a" strokeWidth="1.200"><path d="M1 11L11 1l10 10h-3v10H4V11z" /></svg>
      <svg className="ml-[14px]" width="16" height="17" viewBox="0 0 16 17"><rect x="1" y="1" width="14" height="15" fill="#e6eef8" stroke="#3a62a8" /><text x="8" y="13" fontSize="10" fontFamily="Liberation Serif" fontWeight="700" textAnchor="middle" fill="#2a4f9a">W</text></svg>
      <svg className="ml-[9px]" width="16" height="17" viewBox="0 0 16 17"><rect x="1" y="1" width="14" height="15" fill="#e6f3e6" stroke="#2f8a4a" /><text x="8" y="13" fontSize="11" fontFamily="Liberation Sans" fontWeight="700" textAnchor="middle" fill="#1f7a3a">X</text></svg>
      <svg className="ml-[9px]" width="13" height="18" viewBox="0 0 13 18"><path d="M2 5l2 12h5l2-12z" fill="#c6a35a" stroke="#7a5f28" /><path d="M4 6l-2-5M6 6l1-6M9 6l3-4" stroke="#b3382f" strokeWidth="1.300" /></svg>
      <svg className="ml-[9px]" width="14" height="18" viewBox="0 0 14 18"><path d="M1 3l10-2 2 13-10 3z" fill="#7db4e6" stroke="#4a7fb5" /></svg>
      <svg className="ml-[8px]" width="17" height="17" viewBox="0 0 17 17"><circle cx="8.500" cy="8.500" r="8" fill="#26261f" /><circle cx="8.500" cy="8.500" r="6" fill="#f0a92b" /><path d="M5 12l3.500-8 3.500 8M6.500 9h4" stroke="#222" strokeWidth="1.400" fill="none" /></svg>
      <div className="ml-[7px]"><FloppyRed /></div>
    </div>
    <TaskBtn w="w-[157px]">
      <FloppyRed />
      <span className="ml-[1px]">Total Commander 7....</span>
    </TaskBtn>
    <div className="w-[4px] shrink-0" />
    <TaskBtn w="w-[157px] !bg-[#e3e1d6]">
      <AcadLogo s={16} />
      <span>AutoCAD 2008 - [D:\...</span>
    </TaskBtn>
    <div className="ml-auto h-full flex items-center pr-[12px]">
      <div className="w-[16px] h-[15px] bg-[#92b57f] text-[#e8f2df] text-[11px] leading-[15px] text-center mr-[20px]">EN</div>
      <Tray><Ic><rect x="2" y="8" width="13" height="7" fill="#777" stroke="#333" transform="rotate(15 9 11)" /><circle cx="9" cy="5" r="3.500" fill="#3aa84a" stroke="none" /></Ic></Tray>
      <Tray><div className="w-[16px] h-[16px] bg-white border border-[#2f9a4f] flex items-center justify-center"><svg width="12" height="12" viewBox="0 0 12 12" fill="#f03f7f"><circle cx="6" cy="5" r="4.500" /><path d="M4 8l2 4 1-4z" /></svg></div></Tray>
      <Tray><div className="w-[16px] h-[16px] bg-[#eadf9f] text-[15px] font-bold leading-[16px] text-center text-[#222] font-['Liberation_Serif',serif]">Σ</div></Tray>
      <Tray><Ic><path d="M8 2C4 5 4 12 8 16M5 5c-3 2-3 7 0 9" stroke="#2f6f8f" strokeWidth="1.800" /><path d="M11 8l5-3M11 10h5M11 12l4 3" stroke="#c0457a" strokeDasharray="2 1" /></Ic></Tray>
      <Tray><div className="w-[16px] h-[16px] bg-[#1d2a2a] flex flex-col text-[#9fe0b0] text-[6px] leading-[7px] pl-px">01<div className="h-[3px] w-[13px] mt-[2px] bg-[#3fa05a]" /></div></Tray>
      <Tray><svg width="17" height="17" viewBox="0 0 17 17"><path d="M1 1h5v6l5-6h5L8 9v7H1z" fill="#e01b2b" /><path d="M9 9l7 7M16 11v5h-5" stroke="#111" strokeWidth="2.500" fill="none" /></svg></Tray>
      <Tray><Ic><circle cx="9" cy="9" r="7" fill="#8a8a90" stroke="#555" /><circle cx="9" cy="9" r="3" fill="#ccc" stroke="#333" /></Ic></Tray>
      <Tray><Ic><rect x="1" y="5" width="16" height="11" rx="2" fill="#3f9fc0" stroke="none" /><circle cx="9" cy="10" r="3.500" fill="#e8f4f8" stroke="#123" /></Ic></Tray>
      <Tray><Ic><path d="M2 6h4l5-4v14l-5-4H2z" fill="#c2592f" stroke="#522" /><path d="M13 5c2 2 2 6 0 8M15 3c3 3 3 9 0 12" stroke="#222" /></Ic></Tray>
      <Tray><svg width="16" height="17" viewBox="0 0 16 17"><path d="M1 1h4l6 8V1h4v15h-4L5 8v8H1z" fill="#ea1c24" /></svg></Tray>
      <div className="w-[2px]" />
      <Tray><svg width="19" height="14" viewBox="0 0 19 14"><rect width="19" height="14" fill="#a6cf5e" /><path d="M2 7c4-5 10-5 15 0-5 5-11 5-15 0z" fill="none" stroke="#e8f4c8" strokeWidth="2" /></svg></Tray>
      <span className="ml-[4px] text-[12px] text-[#222]">10:41</span>
    </div>
  </div>
);

export default function App() {
  return (
    <div className="w-[1680px] h-[1050px] overflow-hidden flex flex-col bg-[#bdbdbd] font-['Liberation_Sans',sans-serif] text-[11px] text-[#1a1a1a]">
      <TitleBar />
      <MenuBar />
      <Row1 />
      <Row2 />
      <div className="h-[902px] flex shrink-0">
        <div className="w-[1371px] flex flex-col shrink-0">
          <div className="h-[674px] flex pt-[3px] bg-[#c6c6c6] shrink-0">
            <LeftTools />
            <div className="w-[1337px] flex flex-col">
              <div className="h-[654px] flex shrink-0">
                <Canvas />
                <VScroll />
              </div>
              <Tabs />
            </div>
            <div className="w-[7px] bg-[#bdbdbd]" />
          </div>
          <div className="h-[17px] bg-[#bdbdbd] shrink-0 flex flex-col">
            <div className="h-[3px] bg-[#dedede]" />
            <div className="h-px mt-[2px] bg-[#222]" />
          </div>
          <CommandWindow />
        </div>
        <div className="w-px bg-[#222] shrink-0" />
        <Properties />
      </div>
      <StatusBar />
      <Taskbar />
    </div>
  );
}
